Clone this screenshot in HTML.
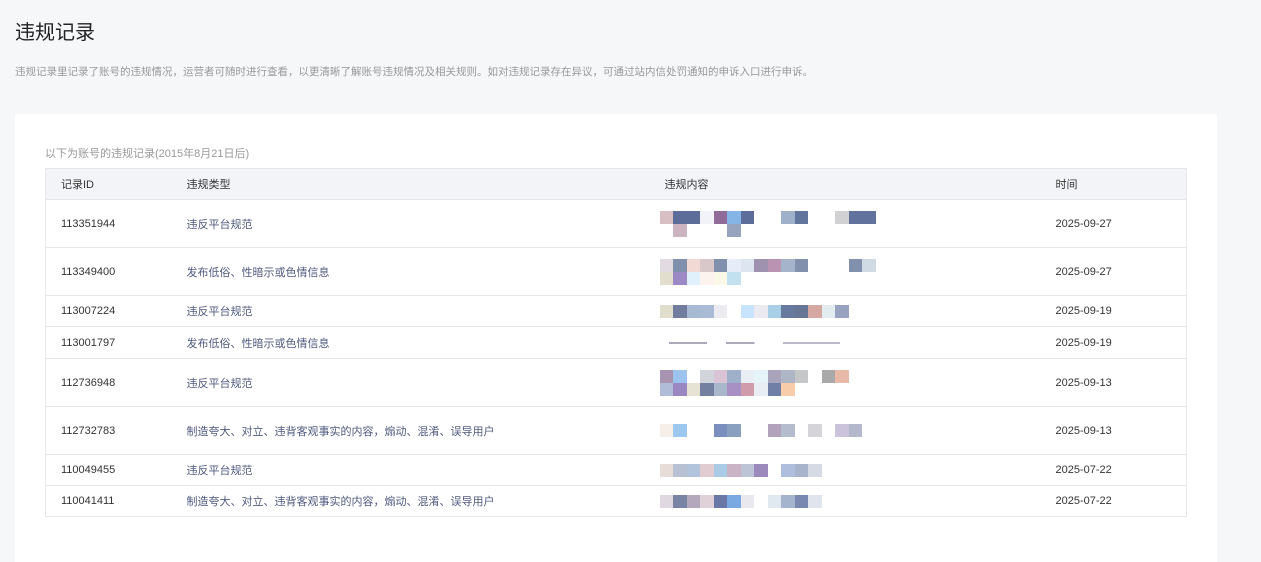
<!DOCTYPE html>
<html><head><meta charset="utf-8"><style>
*{margin:0;padding:0;box-sizing:border-box}
html,body{width:1261px;height:562px;overflow:hidden}
body{background:#f6f7f9;font-family:"Liberation Sans","Noto Sans CJK SC",sans-serif;position:relative;color:#333}
h1{position:absolute;left:15px;top:16px;font-size:20px;font-weight:normal;color:#222}
.desc{position:absolute;left:15px;top:64px;font-size:10.5px;color:#999}
.card{position:absolute;left:15px;top:114px;width:1202px;height:448px;background:#fff}
.sub{position:absolute;left:45px;top:145px;font-size:11px;color:#999}
table{position:absolute;left:45px;top:168px;width:1142px;border-collapse:collapse;font-size:11px;border:1px solid #e6e7eb}
td,th{border-bottom:1px solid #e6e7eb;text-align:left;font-weight:normal;padding:0;vertical-align:middle}
th{background:#f3f4f7;height:31px;color:#333}
td.c1,th.c1{padding-left:15px;width:141px}
td.c2,th.c2{width:478px}
td.c3,th.c3{width:391px}
.t{color:#4f5a7e}
.px{display:flex;flex-wrap:wrap;width:222px;margin-left:-5px}
.px i{display:block;width:13.5px;height:13px}
</style></head><body>
<h1>违规记录</h1>
<div class="desc">违规记录里记录了账号的违规情况，运营者可随时进行查看，以更清晰了解账号违规情况及相关规则。如对违规记录存在异议，可通过站内信处罚通知的申诉入口进行申诉。</div>
<div class="card"></div>
<div class="sub">以下为账号的违规记录(2015年8月21日后)</div>
<table>
<tr><th class="c1">记录ID</th><th class="c2">违规类型</th><th class="c3">违规内容</th><th>时间</th></tr>
<tr style="height:48px"><td class="c1">113351944</td><td class="c2 t">违反平台规范</td><td><div class="px"><i style="background:#d8bfc3"></i><i style="background:#5b6d98"></i><i style="background:#5b6d98"></i><i style="background:#f2f3f8"></i><i style="background:#916b98"></i><i style="background:#85b4e6"></i><i style="background:#5b6d98"></i><i></i><i></i><i style="background:#9fb0cb"></i><i style="background:#62759d"></i><i></i><i></i><i style="background:#d1d0d2"></i><i style="background:#61739c"></i><i style="background:#61739c"></i><i></i><i style="background:#cbb3c0"></i><i></i><i></i><i></i><i style="background:#98a3bd"></i></div></td><td>2025-09-27</td></tr>
<tr style="height:48px"><td class="c1">113349400</td><td class="c2 t">发布低俗、性暗示或色情信息</td><td><div class="px"><i style="background:#e3dbe2"></i><i style="background:#8090ad"></i><i style="background:#f3d9d3"></i><i style="background:#d8c8ca"></i><i style="background:#8090ad"></i><i style="background:#e7edf8"></i><i style="background:#dde6f0"></i><i style="background:#9e92b0"></i><i style="background:#bb93b2"></i><i style="background:#a6b4cb"></i><i style="background:#8090ad"></i><i></i><i></i><i></i><i style="background:#8090ad"></i><i style="background:#d0dae5"></i><i style="background:#e2dece"></i><i style="background:#9c88c4"></i><i style="background:#e0f1fc"></i><i style="background:#fcf2ee"></i><i style="background:#faf8e6"></i><i style="background:#c1e0f0"></i></div></td><td>2025-09-27</td></tr>
<tr style="height:31px"><td class="c1">113007224</td><td class="c2 t">违反平台规范</td><td><div class="px"><i style="background:#e2dece"></i><i style="background:#727d9e"></i><i style="background:#a8b9d2"></i><i style="background:#aabbd6"></i><i style="background:#ebebf1"></i><i></i><i style="background:#c8e3fd"></i><i style="background:#eaeaf0"></i><i style="background:#a9cfe6"></i><i style="background:#67799f"></i><i style="background:#677597"></i><i style="background:#d5a9a2"></i><i style="background:#e3ecf1"></i><i style="background:#98a3c1"></i></div></td><td>2025-09-19</td></tr>
<tr style="height:32px"><td class="c1">113001797</td><td class="c2 t">发布低俗、性暗示或色情信息</td><td><div style="height:2px;width:190px;background:linear-gradient(90deg,#aab 0 20%,#fff 20% 30%,#aab 30% 45%,#fff 45% 60%,#bbc 60% 90%,#fff 90%);margin-left:4px"></div></td><td>2025-09-19</td></tr>
<tr style="height:48px"><td class="c1">112736948</td><td class="c2 t">违反平台规范</td><td><div class="px"><i style="background:#a893b0"></i><i style="background:#9cc4ee"></i><i style="background:#fff"></i><i style="background:#d2d4dc"></i><i style="background:#d8c4d4"></i><i style="background:#9fb0cb"></i><i style="background:#e8eef4"></i><i style="background:#e5f4f8"></i><i style="background:#a9a3bc"></i><i style="background:#aeb6c6"></i><i style="background:#c5c7c8"></i><i></i><i style="background:#a9a9a9"></i><i style="background:#e8b8a8"></i><i></i><i></i><i style="background:#b0bcd8"></i><i style="background:#9a86c0"></i><i style="background:#e6e3d5"></i><i style="background:#73809f"></i><i style="background:#a8b7cc"></i><i style="background:#a990c4"></i><i style="background:#d09cac"></i><i style="background:#e8eef4"></i><i style="background:#707fa5"></i><i style="background:#f8cba9"></i></div></td><td>2025-09-13</td></tr>
<tr style="height:48px"><td class="c1">112732783</td><td class="c2 t">制造夸大、对立、违背客观事实的内容，煽动、混淆、误导用户</td><td><div class="px"><i style="background:#f5eee9"></i><i style="background:#9cc8f0"></i><i></i><i></i><i style="background:#7a8fbd"></i><i style="background:#8aa0c0"></i><i></i><i></i><i style="background:#b3a2bc"></i><i style="background:#b4bccd"></i><i></i><i style="background:#d4d4d9"></i><i></i><i style="background:#cbc2db"></i><i style="background:#b4b8cc"></i></div></td><td>2025-09-13</td></tr>
<tr style="height:31px"><td class="c1">110049455</td><td class="c2 t">违反平台规范</td><td><div class="px"><i style="background:#e8dcd8"></i><i style="background:#b8c0d4"></i><i style="background:#b2c4dc"></i><i style="background:#e1cdd1"></i><i style="background:#a9cbe6"></i><i style="background:#c9b3c4"></i><i style="background:#bcc4d6"></i><i style="background:#9c8abc"></i><i></i><i style="background:#aebedc"></i><i style="background:#a8b4cc"></i><i style="background:#d5dae4"></i></div></td><td>2025-07-22</td></tr>
<tr style="height:31px"><td class="c1">110041411</td><td class="c2 t">制造夸大、对立、违背客观事实的内容，煽动、混淆、误导用户</td><td><div class="px"><i style="background:#e0d8e0"></i><i style="background:#7984a4"></i><i style="background:#b4a8bc"></i><i style="background:#e0d0d8"></i><i style="background:#6a78a8"></i><i style="background:#7aa8e0"></i><i style="background:#e8e8ee"></i><i></i><i style="background:#e0e8f0"></i><i style="background:#a4b4cc"></i><i style="background:#7888b0"></i><i style="background:#e0e4ec"></i></div></td><td>2025-07-22</td></tr>
</table>
</body></html>
